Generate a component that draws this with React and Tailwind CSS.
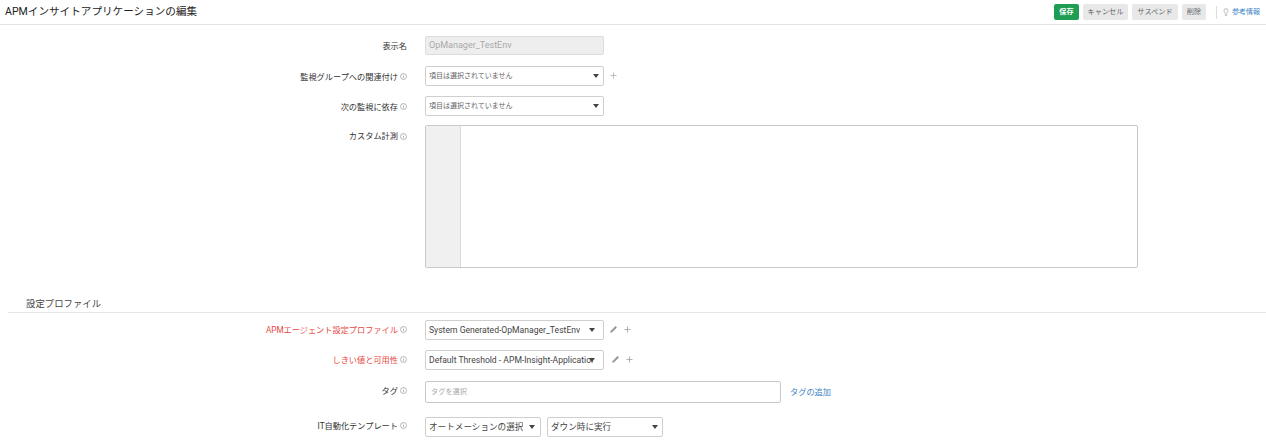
import React from 'react';
import { Pencil, Plus, Lightbulb } from 'lucide-react';

const font = "font-['Roboto','Noto_Sans_CJK_JP',sans-serif]";

function Info() {
  return (
    <svg width="7" height="7" viewBox="0 0 8 8" className="ml-[2px] shrink-0 text-[#9a9a9a]" fill="none" stroke="currentColor" strokeWidth="0.8">
      <circle cx="4" cy="4" r="3.4" />
      <path d="M4 3.4V6M4 2V2.8" />
    </svg>
  );
}

function Label({ children, info = true, red = false, className = '' }) {
  return (
    <div className={`flex w-[407px] shrink-0 items-center justify-end text-[8.2px] ${red ? 'text-[#e8483f]' : 'text-[#333]'} ${className}`}>
      <span>{children}</span>
      {info && <Info />}
    </div>
  );
}

function Caret({ className = 'right-[4px]' }) {
  return <span className={`absolute top-1/2 h-0 w-0 -translate-y-[2px] border-x-[3px] border-t-[4px] border-x-transparent border-t-[#444] ${className}`} />;
}

function Select({ text, width = 'w-[179px]', small = false, caret }) {
  return (
    <div className={`relative flex h-[20px] items-center rounded-[2px] border border-[#cfcfcf] bg-white pl-[3px] pr-[9px] ${width} ${small ? 'text-[7px] text-[#666]' : 'text-[8.6px] text-[#444]'}`}>
      <span className="overflow-hidden whitespace-nowrap">{text}</span>
      <Caret className={caret} />
    </div>
  );
}

function Row({ label, red, info, className = '', labelClass = '', children }) {
  return (
    <div className={`flex items-center ${className}`}>
      <Label red={red} info={info} className={labelClass}>{label}</Label>
      <div className="ml-[18px] flex items-center">{children}</div>
    </div>
  );
}

export default function App() {
  return (
    <div className={`h-[445px] w-[1266px] overflow-hidden bg-white ${font}`}>
      <div className="flex h-[25px] items-center justify-between border-b border-[#e4e4e4] pl-[5px] pr-[6px]">
        <h1 className="text-[10.6px] font-normal text-[#222]">APMインサイトアプリケーションの編集</h1>
        <div className="flex items-center gap-[4px] text-[7.2px]">
          <button className="h-[16px] w-[25px] rounded-[2px] bg-[#1f9d55] font-bold text-white">保存</button>
          <button className="h-[16px] w-[45px] rounded-[2px] bg-[#e8e8e8] text-[#666]">キャンセル</button>
          <button className="h-[16px] w-[46px] rounded-[2px] bg-[#e8e8e8] text-[#666]">サスペンド</button>
          <button className="h-[16px] w-[24px] rounded-[2px] bg-[#e8e8e8] text-[#666]">削除</button>
          <span className="ml-[6px] h-[13px] w-px bg-[#ddd]" />
          <Lightbulb size={8} className="ml-[1px] text-[#999]" />
          <a className="-ml-[2px] text-[7px] text-[#3d85c6]">参考情報</a>
        </div>
      </div>

      <Row label="表示名" info={false} labelClass="translate-y-[1px]" className="mt-[11px]">
        <div className="flex h-[19px] w-[179px] items-center rounded-[2px] border border-[#dcdcdc] bg-[#eeeeee] pl-[3px] text-[9px] text-[#aaa]">OpManager_TestEnv</div>
      </Row>
      <Row label="監視グループへの関連付け" labelClass="translate-y-[1px]" className="mt-[11px]">
        <Select text="項目は選択されていません" small />
        <Plus size={9} className="ml-[5px] -translate-y-[1px] text-[#aaa]" />
      </Row>
      <Row label="次の監視に依存" labelClass="translate-y-[1px]" className="mt-[10px]">
        <Select text="項目は選択されていません" small />
      </Row>

      <div className="mt-[9px] flex">
        <div className="h-fit pt-[5px]"><Label>カスタム計測</Label></div>
        <div className="ml-[18px] flex h-[143px] w-[713px] overflow-hidden rounded-[2px] border border-[#c9c9c9]">
          <div className="w-[35px] border-r border-[#d8d8d8] bg-[#f0f0f0]" />
        </div>
      </div>

      <div className="ml-[8px] mt-[28px] h-[17px] border-b border-[#e6e6e6] pl-[18px] text-[9.4px] leading-[16px] text-[#444]">設定プロファイル</div>

      <Row label="APMエージェント設定プロファイル" red className="mt-[7px]">
        <Select text="System Generated-OpManager_TestEnv" caret="right-[8px]" />
        <Pencil size={7} fill="#999" className="ml-[6px] -translate-y-[1px] text-[#999]" />
        <Plus size={9} className="ml-[6px] -translate-y-[1px] text-[#999]" />
      </Row>
      <Row label="しきい値と可用性" red className="mt-[10px]">
        <Select text="Default Threshold - APM-Insight-Application" caret="right-[8px]" />
        <Pencil size={7} fill="#999" className="ml-[8px] -translate-y-[1px] text-[#999]" />
        <Plus size={9} className="ml-[6px] -translate-y-[1px] text-[#999]" />
      </Row>
      <Row label="タグ" labelClass="-translate-y-[1px]" className="mt-[11px]">
        <div className="flex h-[22px] w-[356px] items-center rounded-[2px] border border-[#c9c9c9] pl-[5px] text-[7.2px] text-[#aaa]">タグを選択</div>
        <a className="ml-[9px] text-[8.2px] text-[#3d85c6]">タグの追加</a>
      </Row>
      <Row label="IT自動化テンプレート" labelClass="-translate-y-[1px]" className="mt-[14px]">
        <Select text="オートメーションの選択" width="w-[116px]" caret="right-[5px]" />
        <div className="ml-[6px]"><Select text="ダウン時に実行" width="w-[116px]" caret="right-[4px]" /></div>
      </Row>
    </div>
  );
}
